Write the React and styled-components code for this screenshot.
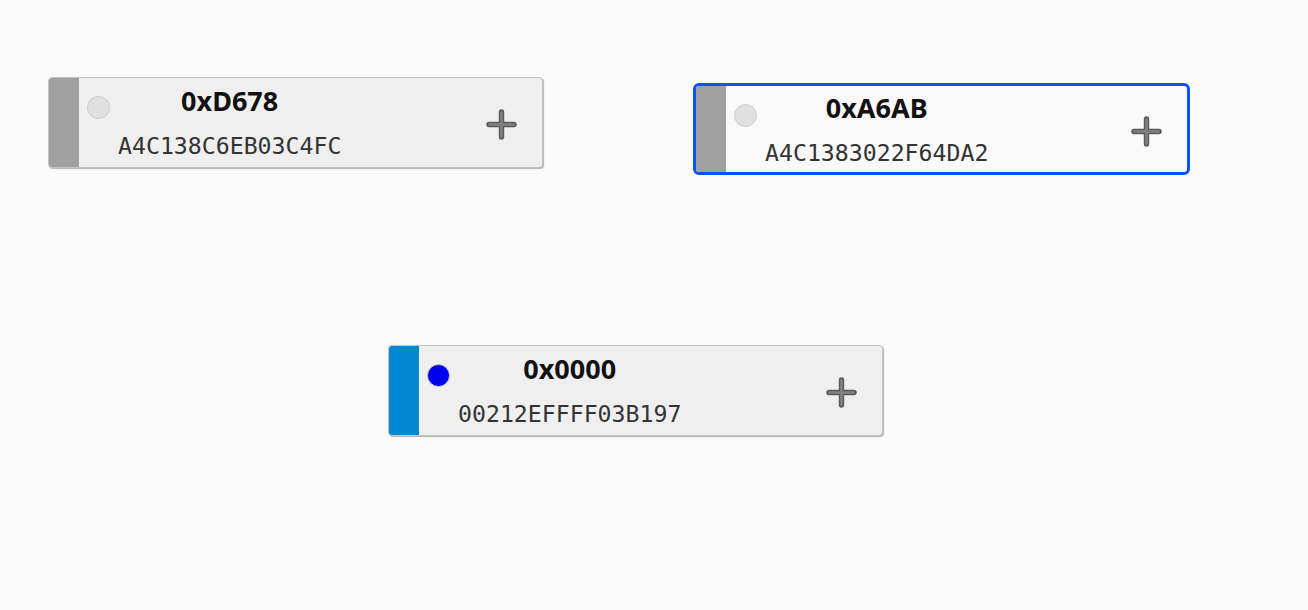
import React from "react";
import styled, { createGlobalStyle } from "styled-components";

const Global = createGlobalStyle`
  html, body { margin: 0; padding: 0; background: #fafafa; }
  body { font-family: "Noto Sans", sans-serif; }
`;

const Canvas = styled.div`
  position: relative;
  width: 100%;
  height: 610px;
  overflow: hidden;
  background: #fafafa;
`;

const Node = styled.div`
  position: absolute;
  box-sizing: border-box;
  display: flex;
  align-items: center;
  width: ${(p) => (p.$selected ? 497 : 495)}px;
  height: ${(p) => (p.$selected ? 92 : 91)}px;
  border: ${(p) => (p.$selected ? "3px solid #0a52ff" : "1px solid #c2c2c2")};
  border-radius: ${(p) => (p.$selected ? 6 : 4)}px;
  background: ${(p) => (p.$selected ? "#f9f9f9" : "#efefef")};
  box-shadow: ${(p) => (p.$selected ? "none" : "1px 1px 1px rgba(0,0,0,0.28)")};
  overflow: hidden;
`;

const Bar = styled.div`
  flex: none;
  align-self: stretch;
  width: 30px;
  background: ${(p) => p.$color};
`;

const Dot = styled.div`
  flex: none;
  align-self: flex-start;
  box-sizing: border-box;
  width: 23px;
  height: 23px;
  margin: 18px 8px 0 8px;
  border-radius: 50%;
  background: ${(p) => p.$color};
  border: 1.5px solid #cccccc;
`;

const Info = styled.div`
  display: flex;
  flex-direction: column;
  align-items: center;
  gap: 16px;
  margin-top: 1px;
`;

const Title = styled.div`
  font-family: "Noto Sans", "Open Sans", sans-serif;
  font-weight: 700;
  font-size: 27px;
  line-height: 30px;
  color: #111111;
`;

const Hex = styled.div`
  font-family: "DejaVu Sans Mono", monospace;
  font-size: 23.2px;
  line-height: 28px;
  color: #333333;
`;

const Spacer = styled.div`
  flex: 1;
`;

const AddButton = styled.button`
  flex: none;
  display: flex;
  align-items: center;
  justify-content: center;
  width: 31px;
  height: 31px;
  margin: 4px 25px 0 0;
  padding: 0;
  border: none;
  background: transparent;
  cursor: pointer;
`;

const PlusIcon = () => (
  <svg width="31" height="31" viewBox="0 0 31 31">
    <g strokeLinecap="round">
      <line x1="3" y1="15.5" x2="28" y2="15.5" stroke="#5a5a5a" strokeWidth="5.4" />
      <line x1="15.5" y1="3" x2="15.5" y2="28" stroke="#5a5a5a" strokeWidth="5.4" />
      <line x1="3.5" y1="15.5" x2="27.5" y2="15.5" stroke="#838383" strokeWidth="2.6" />
      <line x1="15.5" y1="3.5" x2="15.5" y2="27.5" stroke="#838383" strokeWidth="2.6" />
    </g>
  </svg>
);

const nodes = [
  { id: "0xD678", hex: "A4C138C6EB03C4FC", x: 48, y: 77, bar: "#a0a0a0", dot: "#e0e0e0" },
  { id: "0xA6AB", hex: "A4C1383022F64DA2", x: 693, y: 83, bar: "#a0a0a0", dot: "#e0e0e0", selected: true },
  { id: "0x0000", hex: "00212EFFFF03B197", x: 388, y: 345, bar: "#0088d2", dot: "#0000f0" },
];

export default function App() {
  return (
    <>
      <Global />
      <Canvas>
        {nodes.map((n) => (
          <Node key={n.id} $selected={n.selected} style={{ left: n.x, top: n.y }}>
            <Bar $color={n.bar} />
            <Dot $color={n.dot} />
            <Info>
              <Title>{n.id}</Title>
              <Hex>{n.hex}</Hex>
            </Info>
            <Spacer />
            <AddButton aria-label="add">
              <PlusIcon />
            </AddButton>
          </Node>
        ))}
      </Canvas>
    </>
  );
}
